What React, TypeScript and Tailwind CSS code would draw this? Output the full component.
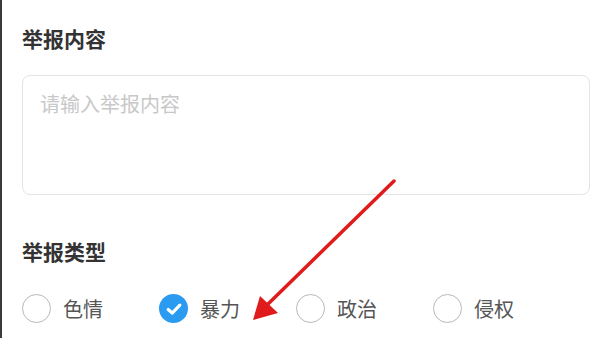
import React, { useState } from 'react';

const types = ['色情', '暴力', '政治', '侵权'];

const Radio: React.FC<{ label: string; checked: boolean; onClick: () => void }> = ({ label, checked, onClick }) => (
  <button onClick={onClick} className="flex w-[137px] items-center gap-[12px] text-left">
    {checked ? (
      <span className="flex h-[29px] w-[29px] items-center justify-center rounded-full bg-[#2a9bf0]">
        <svg width="18" height="18" viewBox="0 0 16 16" fill="none">
          <path d="M2.8 8.4 L6.4 11.6 L13.2 4.6" stroke="white" strokeWidth="2.8" strokeLinecap="round" strokeLinejoin="round" />
        </svg>
      </span>
    ) : (
      <span className="h-[29px] w-[29px] rounded-full border-[1.5px] border-[#b8b8b8] bg-white" />
    )}
    <span className="text-[20px] leading-[28px] text-[#555]">{label}</span>
  </button>
);

export default function App() {
  const [selected, setSelected] = useState('暴力');

  return (
    <div
      className="relative h-[338px] w-[600px] overflow-hidden border-l-[2px] border-[#3a3a3a] bg-white pl-[20px] pr-[10px]"
      style={{ fontFamily: '"Noto Sans CJK SC", "Noto Sans", sans-serif' }}
    >
      {/* 举报内容 */}
      <div className="pt-[24px] text-[21px] font-bold leading-[28px] text-[#333]">举报内容</div>
      <textarea
        placeholder="请输入举报内容"
        className="mt-[23px] block h-[120px] w-[568px] resize-none rounded-[8px] border border-[#e4e4e4] px-[17px] py-[14px] text-[20px] leading-[28px] text-[#333] outline-none placeholder:text-[#c8c8c8]"
      />

      {/* 举报类型 */}
      <div className="mt-[42px] text-[21px] font-bold leading-[28px] text-[#333]">举报类型</div>
      <div className="mt-[29px] flex items-center">
        {types.map((t) => (
          <Radio key={t} label={t} checked={selected === t} onClick={() => setSelected(t)} />
        ))}
      </div>

      {/* annotation arrow */}
      <svg className="pointer-events-none absolute left-0 top-0" width="600" height="338" viewBox="0 0 600 338">
        <line x1="392" y1="181" x2="264" y2="306" stroke="#e01b1b" strokeWidth="3.5" strokeLinecap="round" />
        <polygon points="251,320 258,296 276,313" fill="#e01b1b" />
      </svg>
    </div>
  );
}
